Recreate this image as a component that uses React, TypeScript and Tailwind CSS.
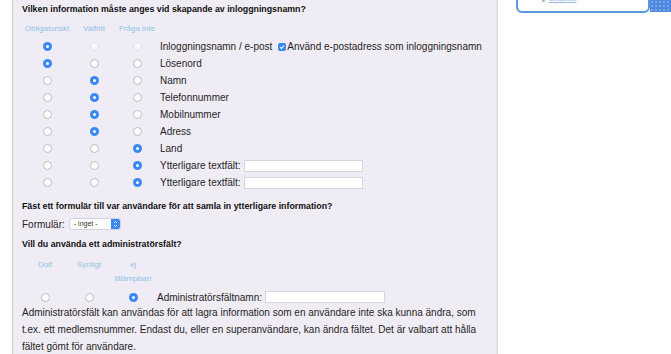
import React from 'react'

const Radio = ({ on, dim }: { on?: boolean; dim?: boolean }) =>
  on ? (
    <span className="flex h-[9px] w-[9px] items-center justify-center rounded-full bg-[#3b88f5]">
      <span className="h-[3px] w-[3px] rounded-full bg-white" />
    </span>
  ) : (
    <span
      className={
        dim
          ? 'block h-[9px] w-[9px] rounded-full border border-[#e2dfe6] bg-[#f7f6f9]'
          : 'block h-[9px] w-[9px] rounded-full border border-[#bdbbc0] bg-white'
      }
    />
  )

const TextBox = ({ w }: { w: string }) => (
  <span className={`ml-[3px] block h-[12px] border border-[#d6d3da] bg-white ${w}`} />
)

const rows: { label: string; pick: number; extra?: 'check' | 'input' }[] = [
  { label: 'Inloggningsnamn / e-post', pick: 0, extra: 'check' },
  { label: 'Lösenord', pick: 0 },
  { label: 'Namn', pick: 1 },
  { label: 'Telefonnummer', pick: 1 },
  { label: 'Mobilnummer', pick: 1 },
  { label: 'Adress', pick: 1 },
  { label: 'Land', pick: 2 },
  { label: 'Ytterligare textfält:', pick: 2, extra: 'input' },
  { label: 'Ytterligare textfält:', pick: 2, extra: 'input' },
]

const cols = ['w-[50px]', 'w-[44px]', 'w-[42px]']

const App = () => {
  return (
    <div className="flex h-[354px] w-[671px] overflow-hidden bg-white font-['Liberation_Sans',Arial,sans-serif] text-[#1f1f1f]">
      <div className="w-[12px] shrink-0" />
      <div className="w-[486px] shrink-0 border-l border-r-2 border-l-[#cac7cd] border-r-[#e4ddec] bg-[#f0ecf5] pl-[9px] pt-[2px]">
        <h3 className="text-[8.8px] font-bold leading-[14px] text-[#111]">
          Vilken information måste anges vid skapande av inloggningsnamn?
        </h3>

        <div className="mt-[4px] flex h-[17px] items-center text-[8px] text-[#8fc4e4]">
          {['Obligatoriskt', 'Valfritt', 'Fråga inte'].map((h, i) => (
            <span key={h} className={`${cols[i]} text-center`}>
              {h}
            </span>
          ))}
        </div>

        <div className="mt-[1px]">
          {rows.map((r, idx) => (
            <div key={idx} className="flex h-[17px] items-center text-[10px]">
              {[0, 1, 2].map((c) => (
                <span key={c} className={`${cols[c]} flex justify-center`}>
                  <Radio on={r.pick === c} dim={idx === 0} />
                </span>
              ))}
              <span className="ml-[2px]">{r.label}</span>
              {r.extra === 'check' && (
                <span className="ml-[6px] flex items-center">
                  <span className="mr-[1px] flex h-[8px] w-[8px] items-center justify-center rounded-[2px] bg-[#3b88f5]">
                    <svg width="6" height="6" viewBox="0 0 6 6">
                      <path d="M1 3.2 L2.4 4.6 L5 1.5" stroke="white" strokeWidth="1.1" fill="none" />
                    </svg>
                  </span>
                  Använd e-postadress som inloggningsnamn
                </span>
              )}
              {r.extra === 'input' && <TextBox w="w-[119px]" />}
            </div>
          ))}
        </div>

        <h3 className="mt-[8px] text-[8.8px] font-bold leading-[14px] text-[#111]">
          Fäst ett formulär till var användare för att samla in ytterligare information?
        </h3>

        <div className="mt-[3px] flex h-[16px] items-center text-[10px]">
          <span>Formulär:</span>
          <span className="ml-[4px] flex h-[12px] w-[52px] items-center justify-between rounded-[3px] border border-[#d4d1d8] bg-white pl-[4px] text-[7px] text-[#333]">
            - inget -
            <span className="flex h-[10px] w-[9px] items-center justify-center rounded-r-[2px] bg-[#3b88f5]">
              <svg width="5" height="8" viewBox="0 0 5 8">
                <path d="M1 3 L2.5 1.5 L4 3 M1 5 L2.5 6.5 L4 5" stroke="white" strokeWidth="0.9" fill="none" />
              </svg>
            </span>
          </span>
        </div>

        <h3 className="mt-[5px] text-[8.8px] font-bold leading-[14px] text-[#111]">
          Vill du använda ett administratörsfält?
        </h3>

        <div className="mt-[7px] flex text-[8px] leading-[14px] text-[#8fc4e4]">
          <span className="w-[46px] text-center">Dolt</span>
          <span className="w-[42px] text-center">Synligt</span>
          <span className="w-[46px] text-center">
            ej
            <br />
            tillämpbart
          </span>
        </div>

        <div className="mt-[4px] flex h-[14px] items-center text-[10px]">
          <span className="flex w-[46px] justify-center">
            <Radio />
          </span>
          <span className="flex w-[42px] justify-center">
            <Radio />
          </span>
          <span className="flex w-[46px] justify-center">
            <Radio on />
          </span>
          <span className="ml-[1px]">Administratörsfältnamn:</span>
          <TextBox w="w-[120px]" />
        </div>

        <p className="w-[455px] text-[10px] leading-[17px]">
          Administratörsfält kan användas för att lagra information som en användare inte ska kunna ändra, som
          t.ex. ett medlemsnummer. Endast du, eller en superanvändare, kan ändra fältet. Det är valbart att hålla
          fältet gömt för användare.
        </p>
      </div>

      <div className="flex flex-1 items-start">
        <div className="ml-[18px] mt-[-28px] flex h-[41px] w-[134px] items-end rounded-b-[6px] border-2 border-[#5d95e2] bg-white pb-[9px] pl-[24px]">
          <span className="mr-[4px] h-[3px] w-[3px] rounded-full bg-[#9bbbe6]" />
          <span className="text-[7px] leading-[7px] text-[#9bbbe6] underline">Skapade</span>
        </div>
        <div className="mt-[-20px] h-[32px] flex-1 bg-[#4d88dc] bg-[radial-gradient(#a9c8f0_0.6px,transparent_0.8px)] bg-[length:4px_4px]" />
      </div>
    </div>
  )
}

export default App
